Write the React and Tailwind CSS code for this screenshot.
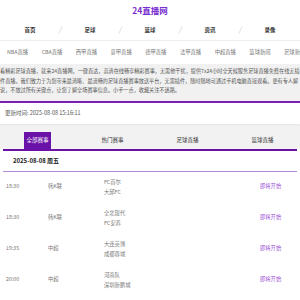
import React from "react";

const nav = ["首页", "足球", "篮球", "资讯", "录像"];
const links = ["NBA直播", "CBA直播", "西甲直播", "意甲直播", "德甲直播", "法甲直播", "中超直播", "篮球新闻", "足球新闻"];
const tabs = ["全部赛事", "热门赛事", "足球直播", "篮球直播"];

const matches = [
  { time: "18:30", league: "韩K联", home: "FC首尔", away: "大邱FC" },
  { time: "18:30", league: "韩K联", home: "全北现代", away: "FC安养" },
  { time: "19:35", league: "中超", home: "大连英博", away: "成都蓉城" },
  { time: "20:00", league: "中超", home: "河南队", away: "深圳新鹏城" },
];

const font = { fontFamily: '"Noto Sans CJK SC", "Liberation Sans", sans-serif' };

const App = () => {
  return (
    <div className="w-[300px] h-[300px] overflow-hidden bg-white" style={font}>
      {/* title */}
      <div className="h-[20px] flex items-center justify-center text-[8.5px] font-bold text-[#7b2fd0] leading-none">
        24直播网
      </div>

      {/* main nav */}
      <div className="h-[21px] flex items-center border-b border-[#eeeeee]">
        {nav.map((item, i) => (
          <React.Fragment key={item}>
            <div className="flex-1 text-center text-[5.5px] font-bold text-[#333]">{item}</div>
            {i < nav.length - 1 && (
              <div className="w-0 flex justify-center">
                <span className="block w-px h-[8px] bg-[#e2e2e2] rotate-[25deg] shrink-0"></span>
              </div>
            )}
          </React.Fragment>
        ))}
      </div>

      {/* sub links */}
      <div className="h-[23px] flex items-center pl-[7px] gap-[13.5px] whitespace-nowrap text-[5.3px] text-[#777]">
        {links.map((l) => (
          <span key={l} className="shrink-0">{l}</span>
        ))}
      </div>

      {/* description */}
      <div className="bg-[#f1f1f1] pt-[2px] pb-[6px] text-[5.15px] leading-[9.5px] text-[#555]">
        看精彩足球直播，就来24直播网，一键直达，高清在线畅享精彩赛事，无需他干扰，提供7x24小时全天候服务足球直播免费在线无插件直播。我们致力于为您带来最清晰、最流畅的足球直播赛事放送平台，无需插件，随时随地可通过手机电脑直接观看。更有专人解说，不放过所有关键点，让您了解全场赛事信息。小手一点，收藏关注不迷路。
      </div>

      <div className="h-[2px] bg-[#7b1fb5]"></div>

      {/* update time */}
      <div className="h-[21px] flex items-center px-[5px] text-[5.5px] text-[#555] shadow-[0_1px_2px_rgba(0,0,0,0.06)] relative">
        更新时间: 2025-08-08 15:16:11
      </div>

      {/* tabs */}
      <div className="bg-[#f2f2f2] pt-[8px] grid grid-cols-4 items-end">
        {tabs.map((t, i) => (
          <div key={t} className="flex justify-center">
            <span
              className={
                i === 0
                  ? "h-[17px] px-[2px] flex items-center bg-[#6a12a8] text-white text-[5.5px]"
                  : "h-[17px] px-[2px] flex items-center text-[#333] text-[5.5px]"
              }
            >
              {t}
            </span>
          </div>
        ))}
      </div>
      <div className="mx-[3px] h-[2px] bg-[#6a12a8]"></div>

      {/* date */}
      <div className="mx-[3px] h-[21px] flex items-center pl-[10px] border-b border-[#b58ad8] text-[6px] font-bold text-[#222]">
        2025-08-08 周五
      </div>

      {/* match rows */}
      {matches.map((m, i) => (
        <div key={i} className="h-[31px] flex items-center text-[5.3px] text-[#777]">
          <div className="w-[48px] pl-[6px]">{m.time}</div>
          <div className="w-[56px]">{m.league}</div>
          <div className="w-[156px] flex flex-col leading-[10.5px]">
            <span>{m.home}</span>
            <span>{m.away}</span>
          </div>
          <div className="text-[#9c4fd6]">即将开始</div>
        </div>
      ))}
    </div>
  );
};

export default App;
